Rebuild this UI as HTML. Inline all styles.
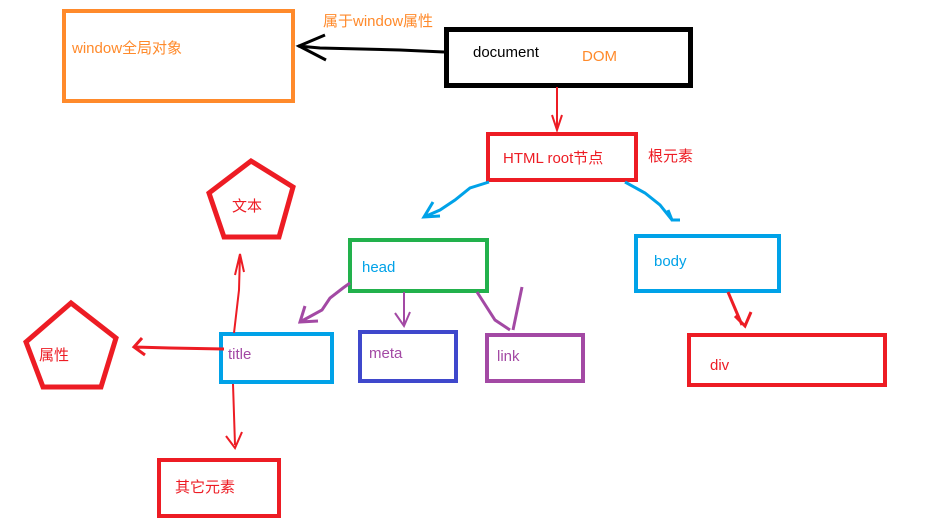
<!DOCTYPE html>
<html><head><meta charset="utf-8"><style>
html,body{margin:0;padding:0;background:#fff;}
svg{display:block}
text{font-family:"Liberation Sans","Noto Sans CJK SC",sans-serif;font-size:15px}
</style></head><body>
<svg width="925" height="532" viewBox="0 0 925 532" xmlns="http://www.w3.org/2000/svg">
<g fill="none" stroke-linejoin="miter">
<rect x="64" y="11" width="229" height="90" stroke="#ff8a2b" stroke-width="4"/>
<rect x="446.5" y="29.5" width="244" height="56" stroke="#000" stroke-width="5"/>
<rect x="488" y="134" width="148" height="46" stroke="#ed1c24" stroke-width="4"/>
<rect x="350" y="240" width="137" height="51" stroke="#22b14c" stroke-width="4"/>
<rect x="636" y="236" width="143" height="55" stroke="#00a2e8" stroke-width="4"/>
<rect x="221" y="334" width="111" height="48" stroke="#00a2e8" stroke-width="4"/>
<rect x="360" y="332" width="96" height="49" stroke="#3f48cc" stroke-width="4"/>
<rect x="487" y="335" width="96" height="46" stroke="#a349a4" stroke-width="4"/>
<rect x="689" y="335" width="196" height="50" stroke="#ed1c24" stroke-width="4"/>
<rect x="159" y="460" width="120" height="56" stroke="#ed1c24" stroke-width="4"/>
<polygon points="251,161 293,187 279,237 224,237 209,193" stroke="#ed1c24" stroke-width="5"/>
<polygon points="71,303 116,338 101,387 43,387 26,342" stroke="#ed1c24" stroke-width="5"/>
<path d="M444,52 L400,50 L320,48 L298,46" stroke="#000" stroke-width="3"/>
<path d="M325,35 L299,46 L326,60" stroke="#000" stroke-width="3"/>
<path d="M557,87 L557,130 M552,115 L557,130 L562,115" stroke="#ed1c24" stroke-width="2"/>
<path d="M489,182 L470,188 L455,200 L440,210 L424,217 M433,202 L424,217 L440,216" stroke="#00a2e8" stroke-width="3"/>
<path d="M625,182 L645,193 L660,205 L672,220 M668,210 L672,220 L680,220" stroke="#00a2e8" stroke-width="3"/>
<path d="M350,283 L343,288 L330,298 L322,310 L300,322 M305,306 L300,322 L318,321" stroke="#a349a4" stroke-width="3"/>
<path d="M404,292 L404,326 M395,313 L404,326 L410,312" stroke="#a349a4" stroke-width="2"/>
<path d="M477,292 L495,320 L510,330 M522,287 L513,330" stroke="#a349a4" stroke-width="3"/>
<path d="M728,292 L742,325 M735,316 L745,326 L751,312" stroke="#ed1c24" stroke-width="3"/>
<path d="M234,333 L239,290 L240,254 M235,275 L240,254 L244,272" stroke="#ed1c24" stroke-width="2"/>
<path d="M224,349 L170,348 L134,347 M142,338 L134,347 L145,355" stroke="#ed1c24" stroke-width="3"/>
<path d="M233,384 L235,445 M226,436 L235,448 L242,432" stroke="#ed1c24" stroke-width="2"/>
</g>
<text x="72" y="53" fill="#ff8a2b">window全局对象</text>
<text x="323" y="26" fill="#ff8a2b" font-size="14">属于window属性</text>
<text x="473" y="57" fill="#000">document</text>
<text x="582" y="61" fill="#ff8a2b">DOM</text>
<text x="503" y="163" fill="#ed1c24">HTML root节点</text>
<text x="648" y="161" fill="#ed1c24" font-size="14">根元素</text>
<text x="232" y="211" fill="#ed1c24" font-size="14">文本</text>
<text x="39" y="360" fill="#ed1c24" font-size="14">属性</text>
<text x="362" y="272" fill="#00a2e8">head</text>
<text x="654" y="266" fill="#00a2e8">body</text>
<text x="228" y="359" fill="#a349a4">title</text>
<text x="369" y="358" fill="#a349a4">meta</text>
<text x="497" y="361" fill="#a349a4">link</text>
<text x="710" y="370" fill="#ed1c24">div</text>
<text x="175" y="492" fill="#ed1c24" font-size="14">其它元素</text>
</svg>
</body></html>
